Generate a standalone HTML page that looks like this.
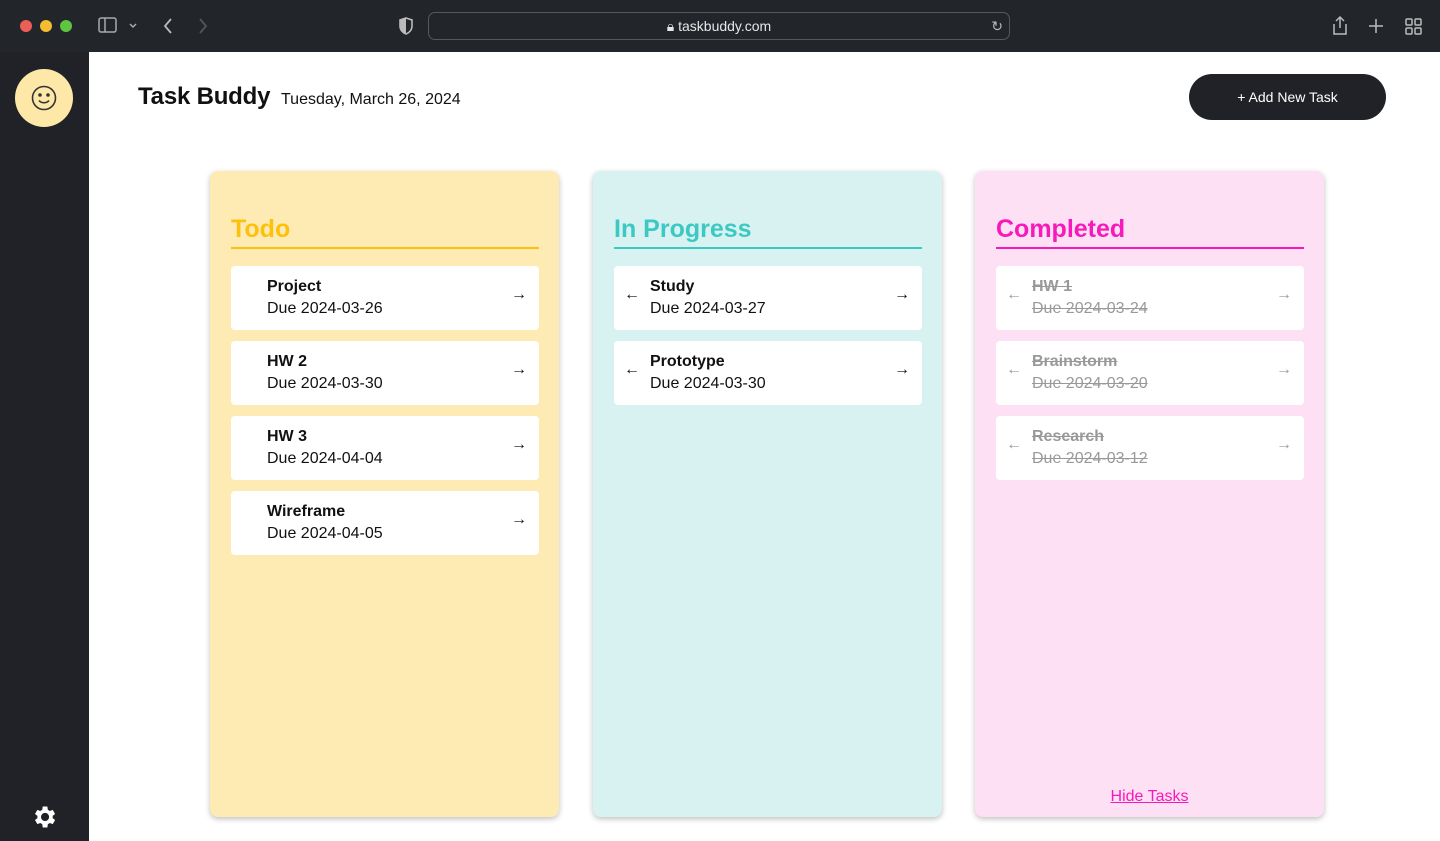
<!DOCTYPE html>
<html><head><style>
*{box-sizing:border-box;margin:0;padding:0}
body{width:1440px;height:841px;overflow:hidden;font-family:"Liberation Sans",sans-serif;background:#fff;position:relative}
.bar{position:absolute;left:0;top:0;width:1440px;height:52px;background:#22252a}
.dot{position:absolute;top:20px;width:12px;height:12px;border-radius:50%}
.url{position:absolute;left:428px;top:12px;width:582px;height:28px;border:1px solid #55585d;border-radius:7px;color:#e6e6e6;font-size:14px;text-align:center;line-height:26px}
.side{position:absolute;left:0;top:52px;width:89px;height:789px;background:#202227}
.av{position:absolute;left:15px;top:17px;width:58px;height:58px;border-radius:50%;background:#fee8a8}
h1{position:absolute;left:138px;top:83px;font-size:24px;font-weight:bold;color:#111;letter-spacing:-0.2px}
.date{position:absolute;left:281px;top:91px;font-size:16px;color:#111}
.btn{position:absolute;left:1189px;top:74px;width:197px;height:46px;border-radius:23px;background:#202227;color:#fff;font-size:14px;text-align:center;line-height:46px}
.col{position:absolute;top:171px;width:349px;height:646px;border-radius:8px;box-shadow:0 2px 6px rgba(0,0,0,.25)}
.col h2{position:absolute;left:21px;top:44px;width:308px;font-size:25px;font-weight:bold;padding-bottom:3px;border-bottom:2px solid}
.card{position:absolute;left:21px;width:308px;height:64px;background:#fff;border-radius:4px}
.t{position:absolute;left:36px;top:12px;font-size:16px;font-weight:bold;color:#111}
.d{position:absolute;left:36px;top:34px;font-size:16px;color:#111}
.ar{position:absolute;right:12px;top:20px;font-size:16px;color:#111;font-weight:bold}
.al{position:absolute;left:10px;top:20px;font-size:16px;color:#111;font-weight:bold}
.done .t,.done .d{color:#999;text-decoration:line-through}
.done .ar,.done .al{color:#999;font-weight:normal}
</style></head><body>
<div class="bar">
<div class="dot" style="left:20px;background:#ec5f57"></div>
<div class="dot" style="left:40px;background:#f4bd30"></div>
<div class="dot" style="left:60px;background:#5fc440"></div>
<svg style="position:absolute;left:98px;top:17px" width="44" height="18" fill="none" stroke="#aaa" stroke-width="1.5"><rect x="1" y="1" width="17" height="14" rx="2"/><line x1="7" y1="1" x2="7" y2="15"/><path d="M32 7l3 3 3-3"/></svg>
<svg style="position:absolute;left:160px;top:16px" width="50" height="20" fill="none" stroke-width="1.8"><path d="M11 3l-6 7 6 7" stroke="#bbb"/><path d="M40 3l6 7-6 7" stroke="#555"/></svg>
<svg style="position:absolute;left:398px;top:17px" width="16" height="18"><path d="M8 1l6 2v6c0 4-3 7-6 8-3-1-6-4-6-8V3z" fill="none" stroke="#bbb" stroke-width="1.6"/><path d="M8 1v16c-3-1-6-4-6-8V3z" fill="#bbb"/></svg>
<div class="url">🔒︎ taskbuddy.com<span style="position:absolute;right:6px;color:#bbb">↻</span></div>
<svg style="position:absolute;left:1330px;top:15px" width="100" height="22" fill="none" stroke="#bbb" stroke-width="1.5"><path d="M4 9v10h12V9M10 2v11M6 6l4-4 4 4"/><path d="M46 4v14M39 11h14"/><rect x="76" y="4" width="6" height="6" rx="1"/><rect x="85" y="4" width="6" height="6" rx="1"/><rect x="76" y="13" width="6" height="6" rx="1"/><rect x="85" y="13" width="6" height="6" rx="1"/></svg>
</div>
<div class="side">
<div class="av"><svg style="position:absolute;left:16px;top:16px" width="26" height="26" fill="none" stroke="#333" stroke-width="1.6"><circle cx="13" cy="13" r="11.5"/><circle cx="9" cy="10" r="1" fill="#333"/><circle cx="17" cy="10" r="1" fill="#333"/><path d="M8 15.5c2.5 3 7.5 3 10 0"/></svg></div>
<svg style="position:absolute;left:30px;top:751px" width="28" height="28" viewBox="0 0 24 24"><path fill="#fff" d="M19.4 13a7.5 7.5 0 0 0 0-2l2.1-1.6-2-3.5-2.5 1a7.4 7.4 0 0 0-1.7-1L14.9 3h-4l-.4 2.9a7.4 7.4 0 0 0-1.7 1l-2.5-1-2 3.5L6.4 11a7.5 7.5 0 0 0 0 2l-2.1 1.6 2 3.5 2.5-1a7.4 7.4 0 0 0 1.7 1l.4 2.9h4l.4-2.9a7.4 7.4 0 0 0 1.7-1l2.5 1 2-3.5zM12.9 15.5a3.5 3.5 0 1 1 0-7 3.5 3.5 0 0 1 0 7z"/></svg>
</div>
<h1>Task Buddy</h1>
<div class="date">Tuesday, March 26, 2024</div>
<div class="btn">+ Add New Task</div>

<div class="col" style="left:210px;background:#feebb3">
<h2 style="color:#fdc10d;border-color:#fdc10d">Todo</h2>
<div class="card" style="top:95px"><div class="t">Project</div><div class="d">Due 2024-03-26</div><div class="ar">→</div></div>
<div class="card" style="top:170px"><div class="t">HW 2</div><div class="d">Due 2024-03-30</div><div class="ar">→</div></div>
<div class="card" style="top:245px"><div class="t">HW 3</div><div class="d">Due 2024-04-04</div><div class="ar">→</div></div>
<div class="card" style="top:320px"><div class="t">Wireframe</div><div class="d">Due 2024-04-05</div><div class="ar">→</div></div>
</div>

<div class="col" style="left:593px;background:#d7f2f1">
<h2 style="color:#3cc9c4;border-color:#3cc9c4">In Progress</h2>
<div class="card" style="top:95px"><div class="al">←</div><div class="t">Study</div><div class="d">Due 2024-03-27</div><div class="ar">→</div></div>
<div class="card" style="top:170px"><div class="al">←</div><div class="t">Prototype</div><div class="d">Due 2024-03-30</div><div class="ar">→</div></div>
</div>

<div class="col done" style="left:975px;background:#fee0f5">
<h2 style="color:#f719bb;border-color:#f719bb">Completed</h2>
<div class="card" style="top:95px"><div class="al">←</div><div class="t">HW 1</div><div class="d">Due 2024-03-24</div><div class="ar">→</div></div>
<div class="card" style="top:170px"><div class="al">←</div><div class="t">Brainstorm</div><div class="d">Due 2024-03-20</div><div class="ar">→</div></div>
<div class="card" style="top:245px"><div class="al">←</div><div class="t">Research</div><div class="d">Due 2024-03-12</div><div class="ar">→</div></div>
<div style="position:absolute;left:0;width:349px;top:617px;text-align:center;font-size:16px;color:#f719bb;text-decoration:underline">Hide Tasks</div>
</div>
</body></html>
